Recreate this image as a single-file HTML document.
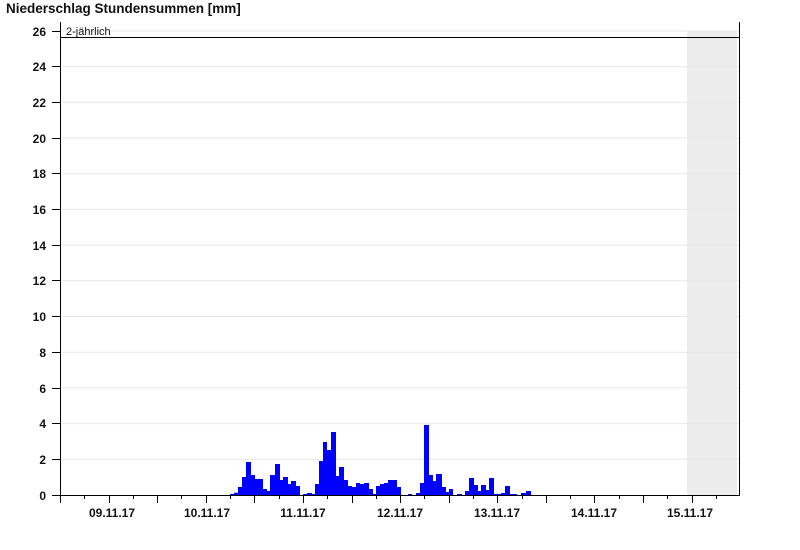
<!DOCTYPE html>
<html><head><meta charset="utf-8"><style>
html,body{margin:0;padding:0;background:#fff;width:800px;height:550px;overflow:hidden}
svg text{font-family:"Liberation Sans",Arial,sans-serif;font-weight:bold;font-size:12px;fill:#111}
</style></head><body>
<svg width="800" height="550" xmlns="http://www.w3.org/2000/svg">
<text x="6" y="13" style="font-size:13.5px">Niederschlag Stundensummen [mm]</text>
<rect x="687" y="31" width="50" height="464" fill="#ececec"/>
<g stroke="#e8e8e8" stroke-width="1">
<line x1="61" y1="459.3" x2="739" y2="459.3"/><line x1="61" y1="423.6" x2="739" y2="423.6"/>
<line x1="61" y1="387.9" x2="739" y2="387.9"/><line x1="61" y1="352.2" x2="739" y2="352.2"/>
<line x1="61" y1="316.5" x2="739" y2="316.5"/><line x1="61" y1="280.8" x2="739" y2="280.8"/>
<line x1="61" y1="245.1" x2="739" y2="245.1"/><line x1="61" y1="209.4" x2="739" y2="209.4"/>
<line x1="61" y1="173.7" x2="739" y2="173.7"/><line x1="61" y1="138" x2="739" y2="138"/>
<line x1="61" y1="102.3" x2="739" y2="102.3"/><line x1="61" y1="66.6" x2="739" y2="66.6"/>
<line x1="61" y1="31" x2="739" y2="31"/>
</g>
<g fill="#0000ff">
<rect x="230" y="494" width="4" height="1"/><rect x="234" y="492.7" width="4" height="2.3"/>
<rect x="238" y="487" width="4" height="8"/><rect x="242" y="477" width="4" height="18"/>
<rect x="246" y="462" width="5" height="33"/><rect x="251" y="475" width="4" height="20"/>
<rect x="255" y="479" width="8" height="16"/><rect x="263" y="489" width="4" height="6"/>
<rect x="267" y="491" width="3" height="4"/><rect x="270" y="475" width="5" height="20"/>
<rect x="275" y="464" width="5" height="31"/><rect x="280" y="480" width="3" height="15"/>
<rect x="283" y="477" width="5" height="18"/><rect x="288" y="484" width="3" height="11"/>
<rect x="291" y="481" width="5" height="14"/><rect x="296" y="486" width="4" height="9"/>
<rect x="303" y="494" width="4" height="1"/><rect x="307" y="493" width="5" height="2"/>
<rect x="312" y="494" width="3" height="1"/><rect x="315" y="484" width="4" height="11"/>
<rect x="319" y="461" width="4" height="34"/><rect x="323" y="442" width="4" height="53"/>
<rect x="327" y="450" width="4" height="45"/><rect x="331" y="432" width="5" height="63"/>
<rect x="336" y="476" width="3" height="19"/><rect x="339" y="467" width="5" height="28"/>
<rect x="344" y="480" width="4" height="15"/><rect x="348" y="486" width="4" height="9"/>
<rect x="352" y="487" width="4" height="8"/><rect x="356" y="483" width="4" height="12"/>
<rect x="360" y="484" width="4" height="11"/><rect x="364" y="483" width="5" height="12"/>
<rect x="369" y="489" width="4" height="6"/><rect x="373" y="494" width="3" height="1"/>
<rect x="376" y="486" width="4" height="9"/><rect x="380" y="484" width="4" height="11"/>
<rect x="384" y="483" width="4" height="12"/><rect x="388" y="480" width="9" height="15"/>
<rect x="397" y="487" width="4" height="8"/><rect x="408" y="494" width="4" height="1"/>
<rect x="416" y="493" width="4" height="2"/><rect x="420" y="483" width="4" height="12"/>
<rect x="424" y="425" width="5" height="70"/><rect x="429" y="475" width="4" height="20"/>
<rect x="433" y="481" width="3" height="14"/><rect x="436" y="474" width="6" height="21"/>
<rect x="442" y="487" width="4" height="8"/><rect x="446" y="492" width="3" height="3"/>
<rect x="449" y="489" width="4" height="6"/><rect x="457" y="494" width="5" height="1"/>
<rect x="465" y="491" width="4" height="4"/><rect x="469" y="478" width="5" height="17"/>
<rect x="474" y="485" width="4" height="10"/><rect x="478" y="491" width="3" height="4"/>
<rect x="481" y="485" width="5" height="10"/><rect x="486" y="490" width="3" height="5"/>
<rect x="489" y="478" width="5" height="17"/><rect x="494" y="494" width="7" height="1"/>
<rect x="501" y="493" width="4" height="2"/><rect x="505" y="486" width="5" height="9"/>
<rect x="510" y="494" width="7" height="1"/><rect x="521" y="493" width="5" height="2"/>
<rect x="526" y="491" width="5" height="4"/>
</g>
<line x1="60" y1="37.5" x2="740" y2="37.5" stroke="#000" stroke-width="1"/>
<text x="66" y="35" style="font-weight:normal;font-size:11px">2-jährlich</text>
<g stroke="#000" stroke-width="1">
<line x1="60.5" y1="22" x2="60.5" y2="495"/>
<line x1="739.5" y1="22" x2="739.5" y2="495"/>
<line x1="60" y1="495.5" x2="740" y2="495.5"/>
</g>
<g stroke="#000" stroke-width="1">
<line x1="52" y1="495.5" x2="60" y2="495.5"/><line x1="52" y1="459.5" x2="60" y2="459.5"/>
<line x1="52" y1="423.5" x2="60" y2="423.5"/><line x1="52" y1="388.5" x2="60" y2="388.5"/>
<line x1="52" y1="352.5" x2="60" y2="352.5"/><line x1="52" y1="316.5" x2="60" y2="316.5"/>
<line x1="52" y1="280.5" x2="60" y2="280.5"/><line x1="52" y1="245.5" x2="60" y2="245.5"/>
<line x1="52" y1="209.5" x2="60" y2="209.5"/><line x1="52" y1="173.5" x2="60" y2="173.5"/>
<line x1="52" y1="138.5" x2="60" y2="138.5"/><line x1="52" y1="102.5" x2="60" y2="102.5"/>
<line x1="52" y1="66.5" x2="60" y2="66.5"/><line x1="52" y1="31.5" x2="60" y2="31.5"/>
</g>
<g text-anchor="end">
<text x="46" y="500">0</text><text x="46" y="464">2</text><text x="46" y="428">4</text>
<text x="46" y="393">6</text><text x="46" y="357">8</text><text x="46" y="321">10</text>
<text x="46" y="285">12</text><text x="46" y="250">14</text><text x="46" y="214">16</text>
<text x="46" y="178">18</text><text x="46" y="143">20</text><text x="46" y="107">22</text>
<text x="46" y="71">24</text><text x="46" y="36">26</text>
</g>
<g stroke="#000" stroke-width="1">
<line x1="60.5" y1="495" x2="60.5" y2="503"/><line x1="84.5" y1="495" x2="84.5" y2="499"/>
<line x1="109.5" y1="495" x2="109.5" y2="503"/><line x1="133.5" y1="495" x2="133.5" y2="499"/>
<line x1="157.5" y1="495" x2="157.5" y2="503"/><line x1="181.5" y1="495" x2="181.5" y2="499"/>
<line x1="206.5" y1="495" x2="206.5" y2="503"/><line x1="230.5" y1="495" x2="230.5" y2="499"/>
<line x1="254.5" y1="495" x2="254.5" y2="503"/><line x1="279.5" y1="495" x2="279.5" y2="499"/>
<line x1="303.5" y1="495" x2="303.5" y2="503"/><line x1="327.5" y1="495" x2="327.5" y2="499"/>
<line x1="352.5" y1="495" x2="352.5" y2="503"/><line x1="376.5" y1="495" x2="376.5" y2="499"/>
<line x1="400.5" y1="495" x2="400.5" y2="503"/><line x1="424.5" y1="495" x2="424.5" y2="499"/>
<line x1="449.5" y1="495" x2="449.5" y2="503"/><line x1="473.5" y1="495" x2="473.5" y2="499"/>
<line x1="497.5" y1="495" x2="497.5" y2="503"/><line x1="522.5" y1="495" x2="522.5" y2="499"/>
<line x1="546.5" y1="495" x2="546.5" y2="503"/><line x1="570.5" y1="495" x2="570.5" y2="499"/>
<line x1="594.5" y1="495" x2="594.5" y2="503"/><line x1="619.5" y1="495" x2="619.5" y2="499"/>
<line x1="643.5" y1="495" x2="643.5" y2="503"/><line x1="667.5" y1="495" x2="667.5" y2="499"/>
<line x1="692.5" y1="495" x2="692.5" y2="503"/><line x1="716.5" y1="495" x2="716.5" y2="499"/>
</g>
<g text-anchor="middle">
<text x="112" y="517">09.11.17</text><text x="207" y="517">10.11.17</text>
<text x="303" y="517">11.11.17</text><text x="400" y="517">12.11.17</text>
<text x="497" y="517">13.11.17</text><text x="594" y="517">14.11.17</text>
<text x="690" y="517">15.11.17</text>
</g>
</svg>
</body></html>
